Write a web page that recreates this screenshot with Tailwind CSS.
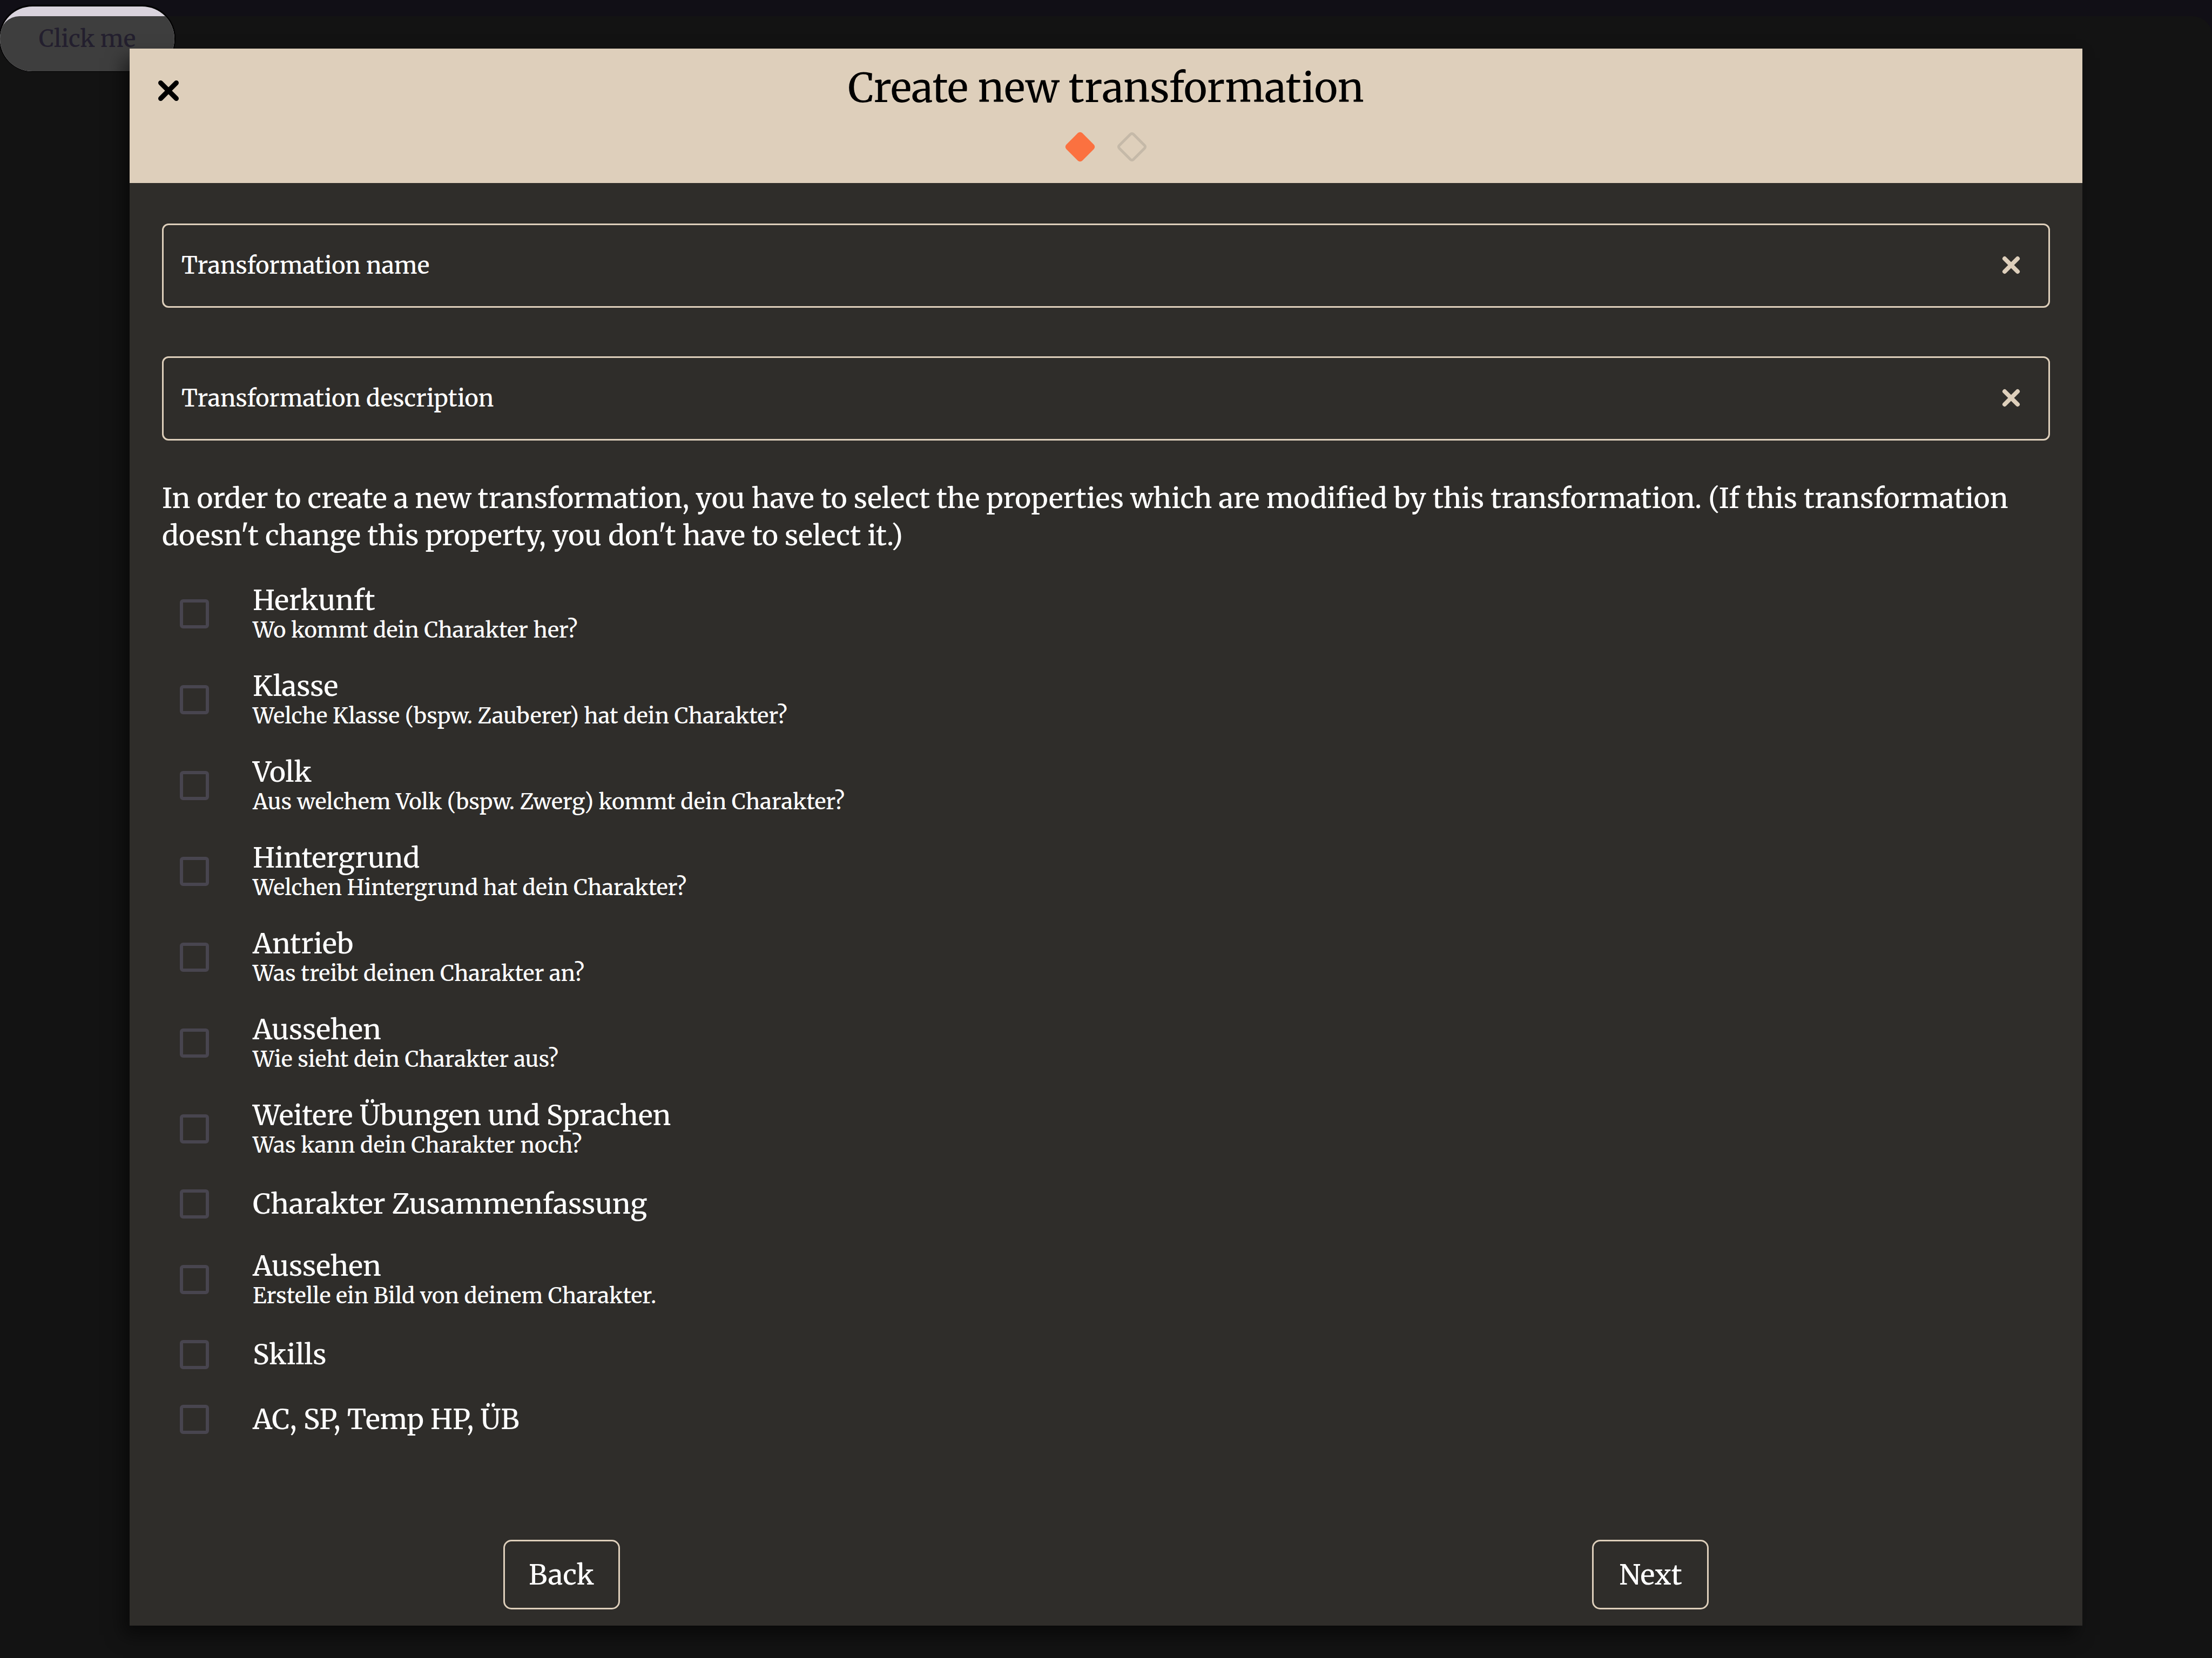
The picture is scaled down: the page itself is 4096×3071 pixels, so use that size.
<!DOCTYPE html>
<html lang="de">
<head>
<meta charset="utf-8">
<title>Create new transformation</title>
<script src="https://cdn.jsdelivr.net/npm/@tailwindcss/browser@4"></script>
</head>
<body class="relative flex min-h-screen flex-col bg-[#110f16] px-[240px] pt-[90px] pb-[60px] font-['Merriweather','DejaVu_Serif',serif] text-white">
  <!-- page behind the dialog -->
  <div class="absolute inset-x-0 top-[30px] bottom-0 rounded-t-[36px] bg-[#131313]"></div>
  <button type="button" class="absolute top-[12px] left-0 h-[120px] w-[323px] overflow-hidden rounded-full bg-[#d9d3dd] text-[43px] leading-[80px] font-medium text-[#231f2e] shadow-[0_-1px_1px_2px_black]">
    <span class="absolute inset-x-0 top-[18px] bottom-0 rounded-tl-[36px] bg-[#3e3e3e]"></span>
    <span class="relative">Click me</span>
  </button>

  <main role="dialog" aria-labelledby="title" class="relative flex grow flex-col bg-[#2f2d2a] shadow-[-12px_18px_30px_rgba(0,0,0,0.5)]">
    <header class="relative flex h-[249px] flex-col items-center bg-[#decfbb] pt-[25px] text-black">
      <button type="button" aria-label="Close" class="absolute top-[54px] left-[48px] size-12">
        <svg viewBox="0 0 48 48" class="size-12" fill="none" stroke="currentColor" stroke-width="9" stroke-linecap="round"><path d="M9.500 9.500L38.500 38.500M38.500 9.500L9.500 38.500"/></svg>
      </button>
      <h1 id="title" class="text-[74px] leading-[96px]">Create new transformation</h1>
      <div class="mt-[33px] flex gap-[40px]">
        <svg viewBox="0 0 56 56" class="size-14"><rect x="7" y="7" width="42" height="42" rx="6" transform="rotate(45 28 28)" fill="#fb7140"/></svg>
        <svg viewBox="0 0 56 56" class="size-14"><rect x="9.500" y="9.500" width="37" height="37" rx="4" transform="rotate(45 28 28)" fill="none" stroke="#c5b9a8" stroke-width="5"/></svg>
      </div>
    </header>

    <form class="flex grow flex-col px-[60px] pt-[75px] pb-[30px] font-medium">
      <div class="flex flex-col gap-[90px]">
        <div class="flex h-[156px] items-center rounded-[12px] border-[3px] border-[#decfbb] pr-[45px] pl-[33px]">
          <input type="text" aria-label="Transformation name" placeholder="Transformation name" class="min-w-0 grow bg-transparent text-[43px] leading-[60px] placeholder:text-white">
          <button type="button" aria-label="Clear name" class="size-12 text-[#decfbb]">
            <svg viewBox="0 0 48 48" class="size-12" fill="none" stroke="currentColor" stroke-width="8" stroke-linecap="round"><path d="M12 11L36 35M36 11L12 35"/></svg>
          </button>
        </div>
        <div class="flex h-[156px] items-center rounded-[12px] border-[3px] border-[#decfbb] pr-[45px] pl-[33px]">
          <input type="text" aria-label="Transformation description" placeholder="Transformation description" class="min-w-0 grow bg-transparent text-[43px] leading-[60px] placeholder:text-white">
          <button type="button" aria-label="Clear description" class="size-12 text-[#decfbb]">
            <svg viewBox="0 0 48 48" class="size-12" fill="none" stroke="currentColor" stroke-width="8" stroke-linecap="round"><path d="M12 11L36 35M36 11L12 35"/></svg>
          </button>
        </div>
      </div>

      <p class="mt-[73px] text-[51px] leading-[69px]">In order to create a new transformation, you have to select the properties which are modified by this transformation. (If this transformation doesn't change this property, you don't have to select it.)</p>

      <ul id="properties" class="mt-[30px] flex flex-col"></ul>

      <div class="mt-auto grid grid-cols-[11fr_4fr_11fr]">
        <button type="button" class="h-[129px] w-[216px] justify-self-center rounded-[15px] border-[3px] border-[#decfbb] text-[51px] leading-[60px]">Back</button>
        <button type="button" class="col-start-3 h-[129px] w-[216px] justify-self-center rounded-[15px] border-[3px] border-[#decfbb] text-[51px] leading-[60px]">Next</button>
      </div>
    </form>
  </main>

  <template id="row">
    <li>
      <label class="flex items-center gap-[81px] pl-[33px]">
        <input type="checkbox" class="size-[54px] shrink-0 appearance-none rounded-[6px] border-[6px] border-[#48454f]">
        <span class="flex flex-col">
          <span class="text-[51px] leading-[60px]"></span>
          <small class="text-[40px] leading-[50px]"></small>
        </span>
      </label>
    </li>
  </template>
  <script>
    const properties = [
      ["Herkunft", "Wo kommt dein Charakter her?"],
      ["Klasse", "Welche Klasse (bspw. Zauberer) hat dein Charakter?"],
      ["Volk", "Aus welchem Volk (bspw. Zwerg) kommt dein Charakter?"],
      ["Hintergrund", "Welchen Hintergrund hat dein Charakter?"],
      ["Antrieb", "Was treibt deinen Charakter an?"],
      ["Aussehen", "Wie sieht dein Charakter aus?"],
      ["Weitere Übungen und Sprachen", "Was kann dein Charakter noch?"],
      ["Charakter Zusammenfassung", ""],
      ["Aussehen", "Erstelle ein Bild von deinem Charakter."],
      ["Skills", ""],
      ["AC, SP, Temp HP, ÜB", ""],
    ];
    const list = document.getElementById("properties");
    const row = document.getElementById("row");
    for (const [name, hint] of properties) {
      const item = row.content.cloneNode(true);
      item.querySelector("span span").textContent = name;
      const small = item.querySelector("small");
      if (hint) small.textContent = hint; else small.remove();
      item.querySelector("label").classList.add(hint ? "h-[159px]" : "h-[120px]");
      list.append(item);
    }
  </script>
</body>
</html>
